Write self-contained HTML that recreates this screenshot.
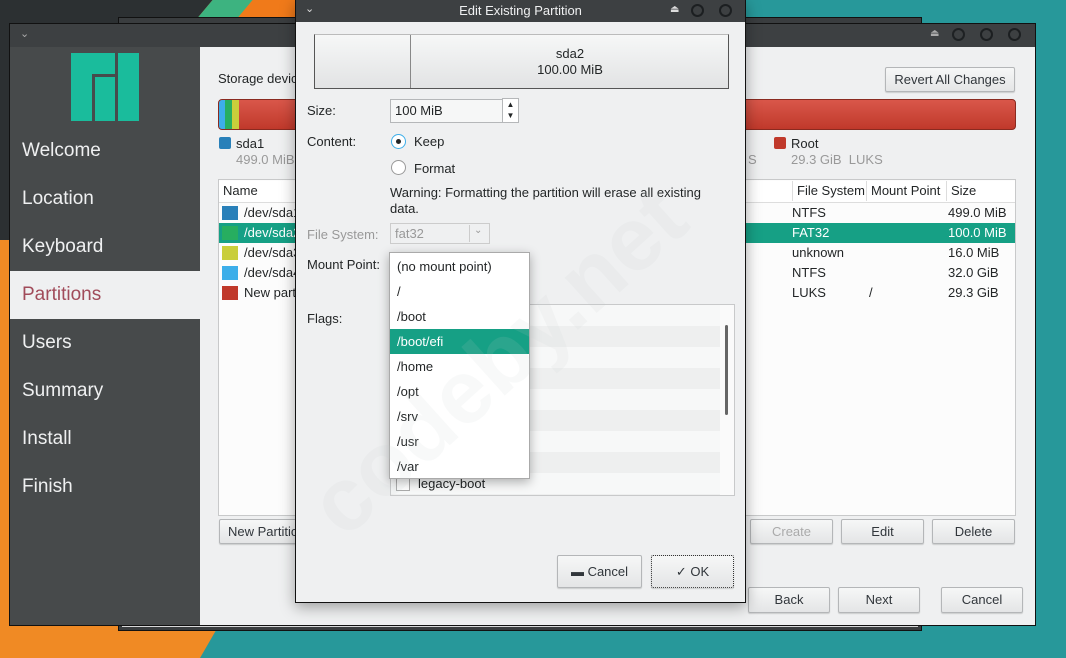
<!DOCTYPE html>
<html><head><meta charset="utf-8"><style>
*{box-sizing:border-box;margin:0;padding:0}
body{width:1066px;height:658px;overflow:hidden;position:relative;font-family:"Liberation Sans","DejaVu Sans",sans-serif;font-size:13px;color:#232627;background:#27989a}
.a{position:absolute}
.btn{position:absolute;background:linear-gradient(#f6f7f7,#e4e5e6);border:1px solid #b4b6b8;border-radius:2px;text-align:center;font-size:13px;color:#31363b;box-shadow:0 1px 1px rgba(0,0,0,.15)}
.side{color:#eff0f1;font-size:19px;position:absolute;left:22px}
.row{position:absolute;left:219px;width:796px;height:20px;line-height:20px}
.sw{position:absolute;width:16px;height:14px;top:3px}
.dd div{height:25px;line-height:25px;padding-left:7px}
.circ{position:absolute;width:13px;height:13px;border:2px solid #1c1f21;border-radius:50%;top:5px}
</style></head><body>
<div class="a" style="left:0;top:0;width:700px;height:240px;background:#2c3032"></div>
<div class="a" style="left:0;top:240px;width:300px;height:418px;background:#f08a24"></div>
<div class="a" style="left:200px;top:0;width:130px;height:30px;background:#f07a1a;transform:skewX(-40deg)"></div>
<div class="a" style="left:200px;top:0;width:40px;height:30px;background:#3db380;transform:skewX(-40deg)"></div>
<div class="a" style="left:200px;top:630px;width:870px;height:28px;background:#27989a;transform:skewX(-30deg);transform-origin:left bottom"></div>
<div class="a" style="left:118px;top:17px;width:804px;height:614px;background:#3a3d3f;border:1px solid #111"></div>
<div class="a" style="left:122px;top:618px;width:796px;height:9px;background:#d7d8d9"></div>
<div class="a" style="left:9px;top:23px;width:1027px;height:603px;border:1px solid #111;background:#eff0f1"></div>
<div class="a" style="left:10px;top:24px;width:1025px;height:23px;background:#3d4042"></div>
<div class="a" style="left:20px;top:27px;color:#aaa;font-size:11px">⌄</div>
<div class="a" style="left:930px;top:28px;color:#aaa;font-size:10px">⏏</div>
<div class="circ" style="left:952px;top:28px;border-color:#1e2123"></div>
<div class="circ" style="left:980px;top:28px"></div>
<div class="circ" style="left:1008px;top:28px"></div>
<div class="a" style="left:10px;top:47px;width:190px;height:578px;background:#474a4b"></div>
<div class="a" style="left:71px;top:53px;width:68px;height:68px">
<div class="a" style="left:0;top:0;width:44px;height:68px;background:#1abc9c"></div>
<div class="a" style="left:21px;top:21px;width:24px;height:47px;background:#474a4b"></div>
<div class="a" style="left:24px;top:24px;width:20px;height:44px;background:#1abc9c"></div>
<div class="a" style="left:47px;top:0;width:21px;height:68px;background:#1abc9c"></div>
</div>
<div class="side" style="top:140px">Welcome</div>
<div class="side" style="top:188px">Location</div>
<div class="side" style="top:236px">Keyboard</div>
<div class="a" style="left:10px;top:271px;width:190px;height:48px;background:#eff0f1"></div>
<div class="side" style="top:284px;color:#a14b5a">Partitions</div>
<div class="side" style="top:332px">Users</div>
<div class="side" style="top:380px">Summary</div>
<div class="side" style="top:428px">Install</div>
<div class="side" style="top:476px">Finish</div>
<div class="a" style="left:218px;top:71px">Storage device</div>
<div class="btn" style="left:885px;top:67px;width:130px;height:25px;line-height:23px">Revert All Changes</div>
<div class="a" style="left:218px;top:99px;width:798px;height:31px;border:1px solid #8a2a20;border-radius:4px;background:linear-gradient(#d9574a,#c0392b);overflow:hidden">
<div class="a" style="left:0;top:0;width:20px;height:31px;background:#3daee9"></div>
<div class="a" style="left:6px;top:0;width:7px;height:31px;background:#27ae60"></div>
<div class="a" style="left:13px;top:0;width:7px;height:31px;background:#c9ce3b"></div>
</div>
<div class="a" style="left:219px;top:137px;width:12px;height:12px;background:#2980b9;border-radius:2px"></div>
<div class="a" style="left:236px;top:136px">sda1</div>
<div class="a" style="left:236px;top:152px;color:#999">499.0 MiB</div>
<div class="a" style="left:748px;top:152px;color:#999">S</div>
<div class="a" style="left:774px;top:137px;width:12px;height:12px;background:#c0392b;border-radius:2px"></div>
<div class="a" style="left:791px;top:136px">Root</div>
<div class="a" style="left:791px;top:152px;color:#999">29.3 GiB&nbsp; LUKS</div>
<div class="a" style="left:218px;top:179px;width:798px;height:337px;background:#fcfcfc;border:1px solid #c8c9ca"></div>
<div class="row" style="top:181px;height:22px;border-bottom:1px solid #ddd;background:#fff"><span class="a" style="left:4px">Name</span><span class="a" style="left:573px;border-left:1px solid #ddd;padding-left:4px">File System</span><span class="a" style="left:647px;border-left:1px solid #ddd;padding-left:4px">Mount Point</span><span class="a" style="left:727px;border-left:1px solid #ddd;padding-left:4px">Size</span></div>
<div class="row" style="top:203px"><div class="sw" style="left:3px;background:#2980b9"></div><span class="a" style="left:25px">/dev/sda1</span><span class="a" style="left:573px">NTFS</span><span class="a" style="left:729px">499.0 MiB</span></div>
<div class="row" style="top:223px;background:#16a085;color:#fff"><div class="sw" style="left:3px;background:#27ae60"></div><span class="a" style="left:25px">/dev/sda2</span><span class="a" style="left:573px">FAT32</span><span class="a" style="left:729px">100.0 MiB</span></div>
<div class="row" style="top:243px"><div class="sw" style="left:3px;background:#c9ce3b"></div><span class="a" style="left:25px">/dev/sda3</span><span class="a" style="left:573px">unknown</span><span class="a" style="left:729px">16.0 MiB</span></div>
<div class="row" style="top:263px"><div class="sw" style="left:3px;background:#3daee9"></div><span class="a" style="left:25px">/dev/sda4</span><span class="a" style="left:573px">NTFS</span><span class="a" style="left:729px">32.0 GiB</span></div>
<div class="row" style="top:283px"><div class="sw" style="left:3px;background:#c0392b"></div><span class="a" style="left:25px">New partition</span><span class="a" style="left:573px">LUKS</span><span class="a" style="left:650px">/</span><span class="a" style="left:729px">29.3 GiB</span></div>
<div class="btn" style="left:219px;top:519px;width:100px;height:25px;line-height:23px;text-align:left;padding-left:8px">New Partition</div>
<div class="btn" style="left:750px;top:519px;width:83px;height:25px;line-height:23px;color:#aaa">Create</div>
<div class="btn" style="left:841px;top:519px;width:83px;height:25px;line-height:23px">Edit</div>
<div class="btn" style="left:932px;top:519px;width:83px;height:25px;line-height:23px">Delete</div>
<div class="btn" style="left:748px;top:587px;width:82px;height:26px;line-height:24px">Back</div>
<div class="btn" style="left:838px;top:587px;width:82px;height:26px;line-height:24px">Next</div>
<div class="btn" style="left:941px;top:587px;width:82px;height:26px;line-height:24px">Cancel</div>
<div class="a" style="left:295px;top:0;width:451px;height:603px;background:#eff0f1;border:1px solid #111;box-shadow:0 4px 14px rgba(0,0,0,.35)"></div>
<div class="a" style="left:296px;top:0;width:449px;height:22px;background:#3d4042;color:#eff0f1;text-align:center;line-height:22px">Edit Existing Partition</div>
<div class="a" style="left:305px;top:2px;color:#ddd;font-size:11px">⌄</div>
<div class="a" style="left:670px;top:4px;color:#ddd;font-size:10px">⏏</div>
<div class="circ" style="left:691px;top:4px"></div>
<div class="circ" style="left:719px;top:4px"></div>
<div class="a" style="left:314px;top:34px;width:415px;height:55px;border:1px solid #555;border-top-color:#bbb;background:linear-gradient(#f6f7f7,#e2e3e4)"></div>
<div class="a" style="left:410px;top:35px;width:1px;height:53px;background:#888"></div>
<div class="a" style="left:411px;top:46px;width:318px;text-align:center;line-height:16px">sda2<br>100.00 MiB</div>
<div class="a" style="left:307px;top:103px">Size:</div>
<div class="a" style="left:390px;top:99px;width:113px;height:24px;border:1px solid #b5b7b9;background:#f6f7f7;padding:3px 4px">100 MiB</div>
<div class="a" style="left:502px;top:98px;width:17px;height:25px;border:1px solid #b5b7b9;background:#fff;font-size:8px;text-align:center;line-height:11px">▲<br>▼</div>
<div class="a" style="left:307px;top:134px">Content:</div>
<div class="a" style="left:391px;top:134px;width:15px;height:15px;border:1px solid #3daee9;border-radius:50%;background:#fff"><div class="a" style="left:4px;top:4px;width:5px;height:5px;background:#232627;border-radius:50%"></div></div>
<div class="a" style="left:414px;top:134px">Keep</div>
<div class="a" style="left:391px;top:160px;width:15px;height:15px;border:1px solid #999;border-radius:50%;background:#fff"></div>
<div class="a" style="left:414px;top:161px">Format</div>
<div class="a" style="left:390px;top:185px;line-height:16px">Warning: Formatting the partition will erase all existing<br>data.</div>
<div class="a" style="left:307px;top:227px;color:#999">File System:</div>
<div class="a" style="left:390px;top:223px;width:100px;height:21px;border:1px solid #ccc;color:#999;padding:2px 4px">fat32<span class="a" style="left:78px;top:1px;border-left:1px solid #ccc;height:17px;padding-left:4px;font-size:10px">⌄</span></div>
<div class="a" style="left:307px;top:257px">Mount Point:</div>
<div class="a" style="left:307px;top:311px">Flags:</div>
<div class="a" style="left:390px;top:304px;width:345px;height:192px;border:1px solid #c8c9ca;background:repeating-linear-gradient(#f7f8f8 0 21px,#eeefef 21px 42px)"></div>
<div class="a" style="left:720px;top:305px;width:14px;height:190px;background:#fafafa"></div>
<div class="a" style="left:725px;top:325px;width:3px;height:90px;background:#666;border-radius:2px"></div>
<div class="a" style="left:396px;top:477px;width:14px;height:14px;border:1px solid #aaa;background:#fff"></div>
<div class="a" style="left:418px;top:476px">legacy-boot</div>
<div class="a dd" style="left:389px;top:252px;width:141px;height:227px;border:1px solid #aaa;background:#fff;box-shadow:0 3px 10px rgba(0,0,0,.3);padding-top:1px">
<div>(no mount point)</div><div>/</div><div>/boot</div><div style="background:#16a085;color:#fff">/boot/efi</div><div>/home</div><div>/opt</div><div>/srv</div><div>/usr</div><div>/var</div></div>
<div class="a" style="left:290px;top:480px;font-size:90px;font-weight:bold;color:rgba(200,202,203,.12);transform:rotate(-42deg);transform-origin:left top;white-space:nowrap">codeby.net</div>
<div class="btn" style="left:557px;top:555px;width:85px;height:33px;line-height:31px">▬ Cancel</div>
<div class="btn" style="left:651px;top:555px;width:83px;height:33px;line-height:31px;border:1px dotted #333">✓ OK</div>
</body></html>
